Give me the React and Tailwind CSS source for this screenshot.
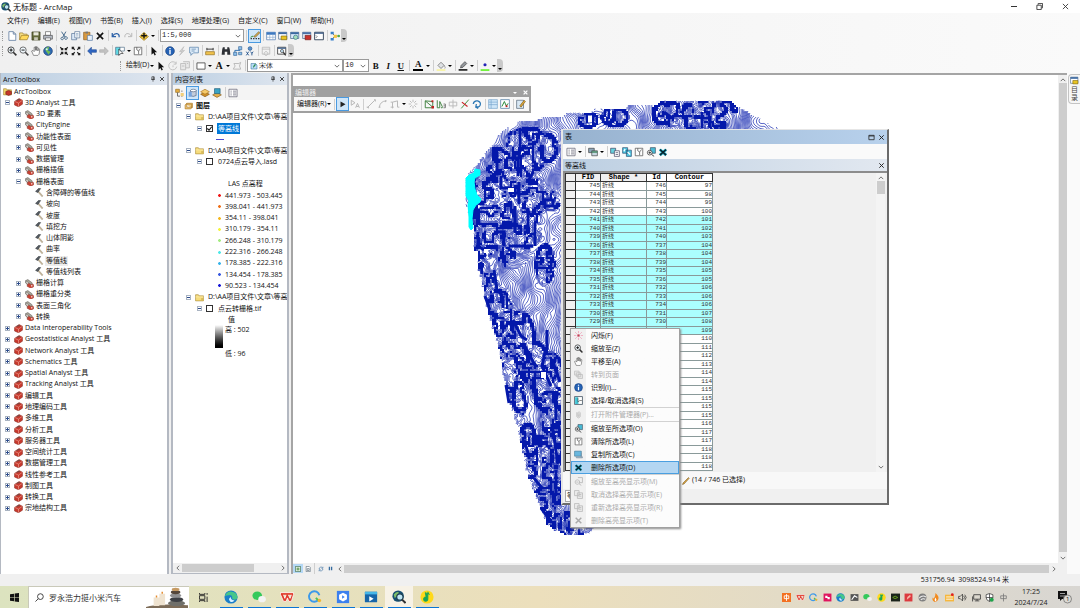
import React from "react";

/* ---------- contour map ---------- */

const OUTLINE = [
  [470, 172], [478, 165], [484, 155], [492, 146], [497, 137], [505, 129], [518, 122], [535, 121], [545, 117],
  [562, 117], [567, 113], [590, 113], [595, 109], [625, 109], [628, 105], [658, 105], [662, 101], [730, 101],
  [737, 106], [745, 110], [752, 115], [760, 118], [768, 124], [782, 130], [782, 150], [700, 400], [640, 500],
  [604, 526], [597, 526], [592, 531], [584, 534], [567, 535], [555, 530], [547, 524], [544, 515], [540, 506],
  [534, 491], [528, 476], [523, 452], [517, 425], [511, 404], [503, 374], [500, 352], [495, 335], [488, 312],
  [484, 294], [482, 280], [479, 270], [478, 252], [475, 250], [474, 228], [470, 215], [466, 205], [466, 180],
];

const SELECTED =
  "M466 178l3-3 5-2 1-4 5 1v5l-5 3-1 4 1 7 2 6 4 4-1 3-4 3-3 5-1 9 1 9-2 2-2-3v-10l-1-12 1-4-3-5z";

// centre x, centre y, half width, half height of the steep ground
const STEEP = [
  [508, 205, 38, 66], [480, 240, 10, 26], [530, 150, 30, 24], [488, 290, 11, 50], [500, 320, 14, 34], [520, 340, 16, 30],
  [534, 365, 16, 26], [550, 385, 18, 34], [554, 440, 16, 70], [506, 378, 10, 32], [516, 400, 11, 26],
  [528, 455, 11, 34], [545, 500, 18, 30], [565, 525, 30, 14], [545, 265, 10, 22], [550, 200, 11, 11],
  [668, 114, 16, 14], [704, 118, 28, 20], [615, 117, 14, 10], [588, 120, 10, 8], [728, 108, 10, 7],
];

const RIDGES =
  "M520 128v20l-1 10-4 2M497 152v22h4M511 158h7v18M501 176v12h9v5h8v-8M519 182v22M533 172l-4 8h6M478 232v14l6 4M494 232h10v14M503 224h12M515 206v26M528 208v26M509 246h24M535 232v14M545 200h8v6h-8zM481 262l1 12M494 270l3 20 6 6M485 296l5 14M503 296v12M513 320l8 16 6 4M524 345l12 22M547 330v20M545 352l-3 14 9 20M553 362l7 20M556 396v24M552 424l6 40M506 385l3 18M524 440l5 16M556 470v26M534 478l8 10M541 508l9 12M702 112v16M710 116v12M664 112l8 6";

function lattice(i, j, seed) {
  const v = Math.sin(i * 127.1 + j * 311.7 + seed * 74.7) * 43758.5453;
  return v - Math.floor(v);
}

function noise(x, y, seed) {
  const i = Math.floor(x);
  const j = Math.floor(y);
  const u = x - i;
  const v = y - j;
  const a = u * u * (3 - 2 * u);
  const b = v * v * (3 - 2 * v);
  const top = lattice(i, j, seed) * (1 - a) + lattice(i + 1, j, seed) * a;
  const bottom = lattice(i, j + 1, seed) * (1 - a) + lattice(i + 1, j + 1, seed) * a;
  return top * (1 - b) + bottom * b;
}

function inside(x, y) {
  let hit = false;
  for (let i = 0, j = OUTLINE.length - 1; i < OUTLINE.length; j = i, i += 1) {
    const [xi, yi] = OUTLINE[i];
    const [xj, yj] = OUTLINE[j];
    if (yi > y !== yj > y && x < ((xj - xi) * (y - yi)) / (yj - yi) + xi) hit = !hit;
  }
  return hit;
}

function steepness(x, y) {
  let m = 0;
  for (const [cx, cy, rx, ry] of STEEP) {
    const d = ((x - cx) / rx) ** 2 + ((y - cy) / ry) ** 2;
    if (d < 1) m = Math.max(m, Math.min(1, (1 - d) * 2.5));
  }
  return m;
}

function height(x, y) {
  const s = steepness(x, y);
  let h = x * 0.5 + noise(x / 34, y / 42, 1) * 22 + noise(x / 13, y / 15, 2) * 7 + noise(x / 5, y / 6, 5) * 1.6;
  if (s > 0) {
    const n = noise(x / 10, y / 11, 3) * 0.6 + noise(x / 4.5, y / 5, 6) * 0.4;
    const step = 1 / (1 + Math.exp(-(n - 0.5) * 16));
    h += s * (step * 14 + noise(x / 3.5, y / 4, 4) * 4);
  }
  return h;
}

function buildContours() {
  const step = 2;
  let lines = "";
  let solid = "";
  const columns = 160;
  const valueRow = (y) => Array.from({ length: columns + 1 }, (_, i) => height(464 + i * step, y));
  let above = valueRow(99);
  for (let y = 99; y < 537; y += step) {
    const below = valueRow(y + step);
    for (let i = 0; i < columns; i += 1) {
      const x = 464 + i * step;
      if (x > 612 && y > 134) break;
      if (!inside(x + 1, y + 1)) continue;
      const a = above[i];
      const b = above[i + 1];
      const c = below[i + 1];
      const d = below[i];
      const lo = Math.min(a, b, c, d);
      const hi = Math.max(a, b, c, d);
      if (hi - lo > 4.6) {
        solid += `M${x} ${y}h2v2h-2z`;
        continue;
      }
      for (let level = Math.ceil(lo); level < hi; level += 1) {
        const pts = [];
        if (a < level !== b < level) pts.push([x + (step * (level - a)) / (b - a), y]);
        if (b < level !== c < level) pts.push([x + step, y + (step * (level - b)) / (c - b)]);
        if (d < level !== c < level) pts.push([x + (step * (level - d)) / (c - d), y + step]);
        if (a < level !== d < level) pts.push([x, y + (step * (level - a)) / (d - a)]);
        for (let k = 0; k + 1 < pts.length; k += 2) {
          lines += `M${pts[k][0].toFixed(1)} ${pts[k][1].toFixed(1)}L${pts[k + 1][0].toFixed(1)} ${pts[k + 1][1].toFixed(1)}`;
        }
      }
    }
    above = below;
  }
  return { lines, solid };
}

const CONTOURS = buildContours();

function ContourMap() {
  return (
    <svg className="absolute top-0 left-0 h-[490px] w-[765px]" viewBox="293 75 765 490" aria-label="等高线">
      <path d={CONTOURS.lines} stroke="#0418aa" strokeWidth="0.65" fill="none" />
      <path d={CONTOURS.solid} fill="#0418aa" />
      <path d={RIDGES} stroke="#0418aa" strokeWidth="3" fill="none" />
      <path d="M508 188h6v4h-6zM484 249h4v4h-4zM541 372h5v6h-5zM588 116h4v6h-4z" fill="#fff" />
      <path d={SELECTED} stroke="#00ffff" strokeWidth="1" fill="#00ffff" strokeLinejoin="round" />
    </svg>
  );
}

/* ---------- icons, drawn on a 16 unit square ---------- */

const G = "#b9b9b9";

const ICONS = {
  logo: (
    <>
      <circle cx="7" cy="7" r="6.5" fill="#174f72" />
      <path d="M2 5q4-4 6-2l-2 4-3 2zM8 8l4-2v4l-4 2z" fill="#7fc06a" />
      <circle cx="9" cy="8" r="3.6" fill="#bfe6f5" stroke="#1c3c50" strokeWidth="1.3" />
      <path d="M11.5 11l4 4" stroke="#333" strokeWidth="2.4" />
    </>
  ),
  file: <path d="M3 1h7l4 4v10H3zM10 1v4h4" fill="#fff" stroke="#56749b" strokeWidth="1.2" />,
  open: (
    <>
      <path d="M1 14V3h5l1 2h6v3" fill="#f7e08a" stroke="#927018" />
      <path d="M1 14l3-7h12l-3 7z" fill="#ffd95a" stroke="#927018" />
    </>
  ),
  save: (
    <>
      <path d="M1.500 1.500h13v13h-13z" fill="#646b3b" stroke="#33361c" />
      <path d="M4 2h8v5H4z" fill="#e8e8dc" />
      <path d="M5 10h6v5H5z" fill="#c9c9b9" />
    </>
  ),
  print: (
    <>
      <path d="M4 1h8v6H4z" fill="#fff" stroke="#555" />
      <path d="M1 7h14v6H1z" fill="#b7bcc6" stroke="#444" />
      <path d="M4 11h8v4H4z" fill="#f7f7f7" stroke="#555" />
    </>
  ),
  cut: <path d="M4 1l6 9M11 1L6 10M5 10a2 2 0 1 0 .1 0M11 9a2.200 2.200 0 1 0 .1 0" fill="none" stroke="#3f6488" strokeWidth="1.500" />,
  copy: (
    <>
      <path d="M1 4h8v10H1z" fill="#dbe8f7" stroke="#49698f" />
      <path d="M6 1h8v10H6z" fill="#fff" stroke="#49698f" />
      <path d="M8 4h4M8 6h4M8 8h4" stroke="#7d9abc" />
    </>
  ),
  paste: (
    <>
      <path d="M1 2h10v12H1z" fill="#d99a40" stroke="#875716" />
      <path d="M4 1h4v3H4z" fill="#777" />
      <path d="M7 7h8v8H7z" fill="#e6f0fb" stroke="#4a6f9d" />
    </>
  ),
  del: <path d="M3 3l10 10M13 3L3 13" stroke="#111" strokeWidth="2.600" />,
  delTeal: (
    <>
      <path d="M3 4l10 9M13 4L3 13" stroke="#2ab6cf" strokeWidth="4.600" />
      <path d="M3 4l10 9M13 4L3 13" stroke="#08242e" strokeWidth="2.600" />
    </>
  ),
  delGray: <path d="M3 3l10 10M13 3L3 13" stroke="#aaa" strokeWidth="2.600" />,
  undo: <path d="M2 3v6h6M2.500 8.500C6 2 14 3 13 10" fill="none" stroke="#2d62a8" strokeWidth="2" />,
  redo: <path d="M14 3v6H8M13.500 8.500C10 2 2 3 3 10" fill="none" stroke={G} strokeWidth="1.600" />,
  addData: (
    <>
      <path d="M8 2l7 7-7 6-7-6z" fill="#f3c83b" stroke="#8e6a10" />
      <path d="M8 3v9M3.500 7.500h9" stroke="#111" strokeWidth="2.200" />
    </>
  ),
  editor: (
    <>
      <path d="M1 12h2M5 12h2M9 12h2M13 12h2" stroke="#222" strokeWidth="2" />
      <path d="M6 9l8-8 1.500 2-7 7z" fill="#e3b451" stroke="#634712" />
      <path d="M1 10l4-2" stroke="#2d8a2d" strokeWidth="1.500" />
    </>
  ),
  grid: (
    <>
      <path d="M1 2h14v12H1z" fill="#fff" stroke="#3a6aa8" />
      <path d="M1 2h14v4H1z" fill="#3d79c0" />
      <path d="M1 10h14M6 6v8M11 6v8" stroke="#86a6cc" />
    </>
  ),
  catalog: (
    <>
      <path d="M1 2h13v11H1z" fill="#fff" stroke="#35577f" />
      <path d="M1 2h13v3H1z" fill="#3b68a0" />
      <path d="M5 8h9v6H5z" fill="#e8c422" stroke="#7d6400" />
    </>
  ),
  search: (
    <>
      <path d="M1 2h13v10H1z" fill="#dceafa" stroke="#35577f" />
      <path d="M1 2h13v3H1z" fill="#3b68a0" />
      <circle cx="9" cy="10" r="3.500" fill="#a7ddba" stroke="#2b6b87" />
    </>
  ),
  toolwin: (
    <>
      <path d="M1 2h13v10H1z" fill="#e7eef7" stroke="#35577f" />
      <path d="M1 2h13v3H1z" fill="#4a71a6" />
      <path d="M5 7h9v7H5z" fill="#c9332d" stroke="#711713" />
    </>
  ),
  python: (
    <>
      <path d="M1 2h14v12H1z" fill="#fff" stroke="#33445b" strokeWidth="1.500" />
      <path d="M1 3.500h14" stroke="#3c5e8c" strokeWidth="2" />
      <path d="M3 7l2 2-2 2" fill="none" stroke="#333" />
    </>
  ),
  model: (
    <>
      <path d="M3 3l5 5-5 5M8 8h6" stroke="#333" fill="none" />
      <path d="M1 1h5v4H1zM1 11h5v4H1z" fill="#377fc9" />
      <path d="M6 6h5v5H6z" fill="#f2c43b" />
      <circle cx="14" cy="8" r="2" fill="#48a848" />
    </>
  ),
  zoomIn: (
    <>
      <circle cx="6.500" cy="6.500" r="5" fill="#eef6fb" stroke="#444" strokeWidth="1.500" />
      <path d="M10 10l5 5" stroke="#333" strokeWidth="2.600" />
      <path d="M4 6.500h5M6.500 4v5" stroke="#111" strokeWidth="1.600" />
    </>
  ),
  zoomOut: (
    <>
      <circle cx="6.500" cy="6.500" r="5" fill="#eef6fb" stroke="#555" strokeWidth="1.300" />
      <path d="M10 10l5 5" stroke="#444" strokeWidth="2.400" />
      <path d="M4 6.500h5" stroke="#111" strokeWidth="1.500" />
    </>
  ),
  hand: <path d="M4 15L1 8l2-1 2 2V2h2v5-6h2v6-5h2v6l1-4 2 1-1 8-2 2z" fill="#fff" stroke="#555" />,
  globe: (
    <>
      <circle cx="8" cy="8" r="7" fill="#2c68b4" stroke="#1d3f6b" />
      <path d="M3 5q4-5 7-3l-2 5 4 2-3 5q-2-3-3-4z" fill="#6fbb55" />
      <circle cx="6" cy="5" r="1.600" fill="#d6efff" />
    </>
  ),
  shrink: <path d="M2 2l4 4M6 3v3H3M14 2l-4 4M10 3v3h3M2 14l4-4M3 10h3v3M14 14l-4-4M13 10h-3v3" fill="none" stroke="#222" strokeWidth="1.800" />,
  expand: <path d="M6 6L2 2M2 5V2h3M10 6l4-4M11 2h3v3M6 10l-4 4M2 11v3h3M10 10l4 4M14 11v3h-3" fill="none" stroke="#222" strokeWidth="1.800" />,
  back: <path d="M1 8l6-6v4h8v4H7v4z" fill="#2f67c4" stroke="#224a91" />,
  forward: <path d="M15 8L9 2v4H1v4h8v4z" fill="#c2c2c2" stroke="#aaa" />,
  select: (
    <>
      <path d="M1 2h7v12H1z" fill="#62dbe6" stroke="#43647e" />
      <path d="M8 2h7v6H8z" fill="#fff" stroke="#43647e" />
      <path d="M6 5v10l3-3h4z" fill="#fff" stroke="#222" />
    </>
  ),
  clear: <path d="M2 2h12v12H2zM6 2v4l3 2 3-4M9 8v5" fill="#fff" stroke="#555" strokeWidth="1.200" />,
  arrow: <path d="M4 1v13l3-3 2 4 2-1-2-4h4z" fill="#111" />,
  info: (
    <>
      <circle cx="8" cy="8" r="7" fill="#2562b5" stroke="#163f7c" />
      <path d="M8 3v2M8 6.500V13" stroke="#fff" strokeWidth="2.200" />
    </>
  ),
  bolt: <path d="M11 1L4 9h4l-4 6 8-8H8z" fill="#d0d0d0" stroke={G} />,
  html: (
    <>
      <path d="M1 2h14v9H7l-4 4v-4H1z" fill="#e1eefa" stroke="#41719e" />
      <path d="M4 5h7M4 8h5" stroke="#41719e" />
    </>
  ),
  measure: (
    <>
      <path d="M1 9h14v5H1z" fill="#f0c24c" stroke="#8b6615" />
      <path d="M3 3v4M13 3v4M3 5h10" stroke="#333" strokeWidth="1.500" />
    </>
  ),
  binoc: <path d="M2 5l1-3h3v3h4V2h3l1 3 1 9h-5V9H6v5H1z" fill="#2c2f35" />,
  route: (
    <>
      <path d="M3 13V7h8V3" fill="none" stroke="#2c6eb0" strokeWidth="1.500" />
      <path d="M1 10h5v5H1zM9 1h5v5H9zM9 10h5v4H9z" fill="#8ec1ec" stroke="#2c5f94" />
    </>
  ),
  xy: (
    <>
      <circle cx="8" cy="4" r="3" fill="#5a93cf" stroke="#23558c" />
      <path d="M2 9l4 6M6 9l-4 6M9 9l2 3 2-3M11 12v3" stroke="#1e4e88" strokeWidth="1.400" fill="none" />
    </>
  ),
  clock: <path d="M2 2h12v11H2zM8 9a3 3 0 1 0 .1 0M2 5h12" fill="none" stroke={G} strokeWidth="1.300" />,
  viewer: (
    <>
      <path d="M1 2h13v11H1z" fill="#fff" stroke="#444" strokeWidth="1.400" />
      <path d="M1 3.500h13" stroke="#3b5e8c" strokeWidth="2" />
      <circle cx="8" cy="8" r="2.500" fill="#c6e4f6" stroke="#333" />
      <path d="M10 10l4 5" stroke="#333" strokeWidth="2" />
    </>
  ),
  rotate: <path d="M13 4a6.500 6.500 0 1 0 1 5M13 1v4H9M8 7v3" fill="none" stroke={G} strokeWidth="1.300" />,
  grp: <path d="M1 4h8v10H1zM5 1h10v10H9M3 8h4M11 4h2" fill="#e8e8e8" stroke={G} strokeWidth="1.300" />,
  rect: <path d="M1.500 3h13v10h-13z" fill="#fff" stroke="#444" strokeWidth="1.300" />,
  poly: <path d="M2 13l3-5-2-4h8l3-2-2 6 2 5z" fill="none" stroke={G} strokeWidth="1.500" />,
  font: (
    <>
      <path d="M2 3h9l3 3v8H2z" fill="#b9dcf6" stroke="#2b6694" />
      <path d="M6 12q0-7 6-9-1 6-6 9" fill="#2b8a4e" />
    </>
  ),
  bucket: (
    <>
      <path d="M3 7l5-5 5 5-5 5z" fill="#dfe2e5" stroke="#555" />
      <path d="M13 7q3 4 1 5" stroke="#777" fill="none" />
      <path d="M1 13h14v3H1z" fill="#f7f3a9" />
    </>
  ),
  pen: (
    <>
      <path d="M4 11l1-4 6-6 3 3-6 6z" fill="#93979c" stroke="#333" />
      <path d="M1 13h14v2.500H1z" fill="#111" />
    </>
  ),
  marker: (
    <>
      <circle cx="8" cy="6" r="2.500" fill="#2323b4" />
      <path d="M1 13h14v3H1z" fill="#73f23e" />
    </>
  ),
  list: <path d="M1.500 2h13v12h-13zM4 5h2M8 5h5M4 8h2M8 8h5M4 11h2M8 11h5" fill="#fff" stroke="#667" strokeWidth="1.200" />,
  tocOrder: (
    <>
      <path d="M1 2h6v5H1z" fill="#e6ae45" stroke="#93691c" />
      <path d="M4 7v6h4M10 5h2M10 9h2M10 13h2" stroke="#666" strokeWidth="1.500" fill="none" />
      <path d="M9 8h5v5H9z" fill="#f1cf7a" />
    </>
  ),
  tocSource: (
    <>
      <path d="M4 4v8q4 3 9 0V4z" fill="#c3cddb" stroke="#4b5d78" />
      <ellipse cx="8.500" cy="4" rx="4.500" ry="2" fill="#fff" stroke="#4b5d78" />
      <path d="M1 6h5v8H1z" fill="#79a4dd" />
    </>
  ),
  layers: (
    <>
      <path d="M8 6l7 4-7 4-7-4z" fill="#d08e26" stroke="#7d5515" />
      <path d="M8 2l7 4-7 4-7-4z" fill="#f6cb6b" stroke="#a36f1c" />
    </>
  ),
  tocSel: (
    <>
      <path d="M8 7l7 4-7 4-7-4z" fill="#e7b04c" stroke="#7d5515" />
      <path d="M4 1h9v8H4z" fill="#3aa3c4" stroke="#1d5975" />
    </>
  ),
  stack: <path d="M2 14V7l3-3v7l10 0-3 3zM5 4h10v7M3.500 5.500h10v7" fill="#efc97d" stroke="#ad7a28" strokeWidth="1.200" />,
  folder: (
    <>
      <path d="M1 3h5l1 2h8v9H1z" fill="#f6dc7c" stroke="#a0812a" />
      <path d="M1 7h14" stroke="#fff3bf" />
      <path d="M11 9h4v5h-4z" fill="#d8bb5b" />
    </>
  ),
  toolroot: (
    <>
      <path d="M1 3h5l1 2h8v9H1z" fill="#f3d66b" stroke="#a0812a" />
      <path d="M5 8l5-2 5 2v5l-5 2-5-2z" fill="#c4362b" stroke="#6b1812" />
    </>
  ),
  toolbox: (
    <>
      <path d="M1 6l8-5 6 3v7l-7 4.500-7-3z" fill="#c8392d" stroke="#8a2a20" />
      <path d="M1 6l7 3 7-5M8 9v6" fill="none" stroke="#f3b0a3" />
      <path d="M5 5q1-3 5-2" fill="none" stroke="#555" strokeWidth="1.500" />
    </>
  ),
  toolset: (
    <>
      <path d="M4 9l5-2 6 3v4l-5 2-6-3z" fill="#d03f30" stroke="#8a2a20" />
      <path d="M1 3l4-2 8 6-2 3zM1 3v4l5 4" fill="#aaa79b" stroke="#5e5b55" />
      <circle cx="12" cy="12" r="1.500" fill="#f5d6cf" />
    </>
  ),
  hammer: (
    <>
      <path d="M6 5l8 9-1.500 1.500L5 7z" fill="#cdbd9a" stroke="#8d8270" strokeWidth="0.800" />
      <path d="M1 6l5-5h4L5 8z" fill="#555c62" stroke="#33383d" />
    </>
  ),
  pageset: (
    <>
      <path d="M1 2h8v8H1z" fill="#67d1dd" stroke="#335" />
      <path d="M7 6h8v9H7z" fill="#fff" stroke="#335" />
      <path d="M9 9h4M9 12h4" stroke="#335" />
    </>
  ),
  switchsel: (
    <>
      <path d="M1 1h8v9H1zM7 5h8v10H7z" fill="#4fc6e1" stroke="#246" />
      <path d="M9 8l4 4M5 3l-2 4" stroke="#fff" strokeWidth="2" />
    </>
  ),
  zoomSel: (
    <>
      <path d="M7 1h8v9H7z" fill="#49bad4" stroke="#345" />
      <circle cx="6" cy="9" r="3.800" fill="#fff" stroke="#444" strokeWidth="1.300" />
      <path d="M4 9h4M6 7v4M9 12l4 3" stroke="#333" strokeWidth="1.400" />
    </>
  ),
  related: (
    <>
      <path d="M1 2h9v7H1z" fill="#8da5b8" stroke="#333" />
      <path d="M6 6h9v8H6z" fill="#c8d8e2" stroke="#333" />
      <path d="M6 8h9" stroke="#2c7a4c" strokeWidth="2" />
    </>
  ),
  flash: (
    <>
      <path d="M8 0v4M8 12v4M0 8h4M12 8h4M2 2l3 3M14 2l-3 3M2 14l3-3M14 14l-3-3" stroke="#f09ab4" strokeWidth="1.300" />
      <path d="M6 6h4v4H6z" fill="#c33b53" />
    </>
  ),
  pages: <path d="M1 2h8v7H1zM4 5h8v7H4zM7 8h8v7H7z" fill="#e9e9e9" stroke="#bbb" strokeWidth="1.300" />,
  selbox: (
    <>
      <path d="M1 1h14v14H1z" fill="#fff" stroke="#345" strokeWidth="1.300" />
      <path d="M2 2h5l1 12H2z" fill="#42c5d6" />
      <path d="M7 3v8l3-3h4" fill="none" stroke="#333" />
    </>
  ),
  clip: <path d="M5 4v8q3 4 6 0V5q-2-4-4 0v6h2V6" fill="none" stroke="#bbb" strokeWidth="1.500" />,
  copysel: (
    <>
      <path d="M1 2h12v9H1z" fill="#69b7de" stroke="#38708e" />
      <path d="M4 12h11v2H4zM13 5v8" fill="#a8c9dc" stroke="#789" />
    </>
  ),
  zoomGray: <path d="M7 1h8v9H9M6 5a4 4 0 1 0 .1 0M9 12l4 3M4 9h4" fill="none" stroke="#bbb" strokeWidth="1.600" />,
  pageGray: <path d="M1 1h8v9H1zM6 5h9v10H6zM8 8h5M8 11h5" fill="#ededed" stroke="#bbb" strokeWidth="1.500" />,
  pencil: <path d="M1 15l1-3L13 1l1.500 1.500L4 14z" fill="#d9a441" stroke="#6f5116" />,
  eArrow: <path d="M4 4v9l8-4.500z" fill="#222" />,
  eArrowA: <path d="M2 2v8l6-4zM9 14l3-7 3 7M10 12h4" fill="none" stroke={G} strokeWidth="1.600" />,
  eLine: <path d="M2 14L14 2M1 13h3v2M13 1h2v3" fill="none" stroke={G} strokeWidth="1.600" />,
  eArc: <path d="M2 14Q3 3 14 3M1 13h3M12 2v3" fill="none" stroke={G} strokeWidth="1.600" />,
  eTrace: <path d="M1 13h5M4 15V5l8-2v10h3M1 5h3" fill="none" stroke={G} strokeWidth="1.600" />,
  eBurst: <path d="M8 1v4M8 11v4M1 8h4M11 8h4M3 3l3 3M13 3l-3 3M3 13l3-3M13 13l-3-3" stroke={G} strokeWidth="1.500" />,
  eVert: (
    <>
      <path d="M2 3v11h12V4L2 3l12 10" fill="none" stroke="#3d7f3d" strokeWidth="1.500" />
      <path d="M12 11h4v4h-4zM12 2h3v3h-3z" fill="#b22" />
    </>
  ),
  eShape: (
    <>
      <path d="M2 2v12h4V4l4 8v2H8" fill="none" stroke="#3d7f3d" strokeWidth="1.500" />
      <path d="M12 8h3v6h-3M12 11h3" fill="none" stroke="#444" />
    </>
  ),
  eCut: <path d="M8 1v14M2 5h12v6H2z" fill="none" stroke={G} strokeWidth="1.500" />,
  eSplit: (
    <>
      <path d="M2 15L14 1" stroke="#3c8c3c" strokeWidth="1.500" />
      <path d="M3 5l9 7" stroke="#c22" strokeWidth="1.800" />
    </>
  ),
  eRot: <path d="M2 8Q3 2 9 3q6 2 4 7-2 4-6 2M7 8l-1 5 4 2" fill="none" stroke="#2e79b5" strokeWidth="2" />,
  eAttr: <path d="M1 1h14v14H1zM5 1v14M1 5h14M1 9h14" fill="#cfe6f8" stroke="#6f9fca" />,
  eSketch: (
    <>
      <path d="M1 1h14v14H1z" fill="#fff" stroke="#5f87ab" strokeWidth="1.300" />
      <path d="M3 12l4-8 3 7 3-4" fill="none" stroke="#2b8a3d" strokeWidth="1.600" />
      <path d="M9 10h3v3H9z" fill="#b22" />
    </>
  ),
  eCreate: (
    <>
      <path d="M1 2h11v13H1z" fill="#d8e8f5" stroke="#456" />
      <path d="M6 11l7-9 2 2-7 9z" fill="#e2a93a" stroke="#6f5116" />
    </>
  ),
  refresh: <path d="M3 8a5 5 0 0 1 9-3M13 2v4H9M13 8a5 5 0 0 1-9 3M3 14v-4h4" fill="none" stroke="#336a9e" strokeWidth="1.600" />,
  pause: <path d="M4 4h3v8H4zM9 4h3v8H9z" fill="#336a9e" />,
  mapview: (
    <>
      <path d="M1 1h14v14H1z" fill="#fff" stroke="#3b6e4b" strokeWidth="2" />
      <path d="M4 4h8v8H4z" fill="#76a96e" />
    </>
  ),
  layoutview: <path d="M3 1h8l3 3v11H3zM6 7h5v5H6z" fill="#fff" stroke="#456" strokeWidth="1.500" />,
  pin: <path d="M5 2h6v7H5zM3 9h10M8 9v6M10 2v7" fill="none" stroke="#333" strokeWidth="1.800" />,
  close: <path d="M3 3l10 10M13 3L3 13" stroke="#222" strokeWidth="2.200" />,
  max: <path d="M2 3h12v10H2zM2 4.500h12" fill="none" stroke="#222" strokeWidth="1.800" />,
};

function Icon({ name, className = "size-[11px]" }) {
  return (
    <svg viewBox="0 0 16 16" className={`shrink-0 ${className}`} aria-hidden="true">
      {ICONS[name]}
    </svg>
  );
}

function Chevron({ dir = "down", className = "size-[7px]" }) {
  const d = { down: "M2 5l6 6 6-6", up: "M2 11l6-6 6 6", left: "M11 2L5 8l6 6", right: "M5 2l6 6-6 6" }[dir];
  return (
    <svg viewBox="0 0 16 16" className={`shrink-0 ${className}`} aria-hidden="true">
      <path d={d} fill="none" stroke="#555" strokeWidth="2.200" />
    </svg>
  );
}

function Caret({ className = "text-black" }) {
  return (
    <span className={`flex w-[6px] shrink-0 items-center justify-center ${className}`}>
      <svg viewBox="0 0 8 4" className="h-[2px] w-[4px]" aria-hidden="true">
        <path d="M0 0h8L4 4z" fill="currentColor" />
      </svg>
    </span>
  );
}

const Sep = () => (
  <span className="flex w-[4px] shrink-0 justify-center">
    <span className="h-[11px] w-px bg-[#cfcfcf]" />
  </span>
);
const Grip = () => <span className="mx-[2px] h-[10px] w-[2px] shrink-0 border-l border-dotted border-[#999]" />;
const Overflow = () => (
  <button aria-label="工具栏选项" className="flex h-[13px] w-[6px] shrink-0 items-end justify-center rounded-r-sm bg-[#c9c9c9] pb-[2px]">
    <Caret />
  </button>
);

function Tool({ name, label, active }) {
  return (
    <button
      aria-label={label || name}
      className={`flex h-[14px] shrink-0 items-center justify-center ${active ? "w-[13px] border border-[#4a9ae0] bg-[#cfe6f9]" : "w-[12px]"}`}
    >
      <Icon name={name} className="size-[10px]" />
    </button>
  );
}

/* "|" is a separator, "v" a drop-down caret, "*" marks a pressed button */
function Tools({ items }) {
  return items.split(" ").map((item, i) => {
    if (item === "|") return <Sep key={i} />;
    if (item === "v") return <Caret key={i} />;
    if (item.startsWith("*")) return <Tool key={i} name={item.slice(1)} active />;
    return <Tool key={i} name={item} />;
  });
}

function Combo({ label, value, className, icon, font = "font-sans" }) {
  return (
    <div className={`relative flex h-[13px] shrink-0 items-center border border-[#9a9a9a] bg-white ${className}`}>
      {icon && <Icon name={icon} className="ml-[2px] size-[8px]" />}
      <select aria-label={label} className={`h-full min-w-0 flex-1 appearance-none bg-transparent pl-[1px] text-[7px] leading-[11px] text-[#222] outline-none ${font}`}>
        <option>{value}</option>
      </select>
      <Chevron className="pointer-events-none absolute right-[2px] size-[6px]" />
    </div>
  );
}

/* ---------- header ---------- */

const MENUS = ["文件(F)", "编辑(E)", "视图(V)", "书签(B)", "插入(I)", "选择(S)", "地理处理(G)", "自定义(C)", "窗口(W)", "帮助(H)"];

function Header() {
  return (
    <header>
      <div className="flex h-[13px] items-center bg-white">
        <Icon name="logo" className="ml-[1px] size-[10px]" />
        <h1 className="ml-[2px] text-[8px] leading-[12px]">无标题 - ArcMap</h1>
        <div className="ml-auto flex items-center gap-[19px] pr-[11px]">
          <button aria-label="最小化" className="flex h-[10px] w-[6px] items-center"><span className="h-px w-full bg-[#333]" /></button>
          <button aria-label="还原">
            <svg viewBox="0 0 8 8" className="size-[7px]"><path d="M1 2.500h5v5H1zM2.500 2V.5h5v5H6.500" fill="none" stroke="#333" /></svg>
          </button>
          <button aria-label="关闭">
            <svg viewBox="0 0 8 8" className="size-[7px]"><path d="M1 1l6 6M7 1L1 7" stroke="#333" /></svg>
          </button>
        </div>
      </div>
      <div className="bg-linear-to-r from-[#f0f0f0] to-[#fafafa]">
        <nav className="flex h-[15px] items-center gap-[9px] pl-[7px] text-[7px] leading-[12px]">
          {MENUS.map((m) => <button key={m}>{m}</button>)}
        </nav>
        <div className="flex h-[15px] items-center">
          <Grip />
          <Tools items="file open save print | cut copy paste del | undo redo | addData v |" />
          <Combo label="比例尺" value="1:5,000" className="w-[84px]" font="font-[Liberation_Mono,monospace]" />
          <Tools items="| *editor | grid catalog search toolwin python | model" />
          <Overflow />
        </div>
        <div className="flex h-[15px] items-center">
          <Grip />
          <Tools items="zoomIn zoomOut hand globe | shrink expand | back forward | select v clear | arrow | info bolt html | measure | binoc route xy | clock | viewer" />
          <Overflow />
        </div>
        <div className="flex h-[15px] items-center pl-[118px] text-[7px]">
          <Grip />
          <button className="ml-[2px] flex items-center">绘制(D)<Caret /></button>
          <Tools items="arrow rotate grp | rect v" />
          <button aria-label="文本" className="w-[12px] font-[Liberation_Serif,serif] text-[10px] leading-[12px] font-bold">A</button>
          <Tools items="v poly |" />
          <Combo label="字体" value="宋体" icon="font" className="w-[96px]" />
          <Combo label="字号" value="10" className="w-[26px]" font="font-[Liberation_Mono,monospace]" />
          <div className="flex font-[Liberation_Serif,serif] text-[9px] leading-[12px] font-bold">
            <button className="w-[13px]">B</button>
            <button className="w-[12px] italic">I</button>
            <button className="w-[13px] underline">U</button>
          </div>
          <Sep />
          <button aria-label="字体颜色" className="mx-[2px] flex h-[11px] w-[10px] items-center justify-center border-b-2 border-black font-[Liberation_Serif,serif] text-[9px] leading-[9px] font-bold">A</button>
          <Tools items="v | bucket v | pen v | marker v" />
          <Overflow />
        </div>
      </div>
    </header>
  );
}

/* ---------- docked panels ---------- */

function PanelTitle({ children }) {
  return (
    <div className="flex h-[12px] shrink-0 items-center bg-linear-to-r from-[#bccfe2] to-[#dfe6ef] pl-[2px] text-[7px]">
      <h2 className="flex-1 leading-[11px]">{children}</h2>
      <button aria-label="自动隐藏"><Icon name="pin" className="mr-[3px] size-[6px]" /></button>
      <button aria-label="关闭"><Icon name="close" className="mr-[2px] size-[6px]" /></button>
    </div>
  );
}

function Toggle({ open }) {
  return (
    <button aria-label={open ? "折叠" : "展开"} aria-expanded={!!open} className="flex size-[5px] shrink-0 items-center justify-center border border-[#a9b3c1] bg-white">
      <svg viewBox="0 0 3 3" className="size-[3px]">
        <path d={open ? "M0 1.500h3" : "M0 1.500h3M1.500 0v3"} stroke="#2c4b8c" />
      </svg>
    </button>
  );
}

const sets = (names) => names.map((n) => [2, "toolset", n]);
const TREE = [
  [0, "toolroot", "ArcToolbox"],
  [1, "toolbox", "3D Analyst 工具", true],
  ...sets(["3D 要素", "CityEngine", "功能性表面", "可见性", "数据管理", "栅格插值"]),
  [2, "toolset", "栅格表面", true],
  ...["含障碍的等值线", "坡向", "坡度", "填挖方", "山体阴影", "曲率", "等值线", "等值线列表"].map((n) => [3, "hammer", n]),
  ...sets(["栅格计算", "栅格重分类", "表面三角化", "转换"]),
  ...[
    "Data Interoperability Tools", "Geostatistical Analyst 工具", "Network Analyst 工具", "Schematics 工具",
    "Spatial Analyst 工具", "Tracking Analyst 工具", "编辑工具", "地理编码工具", "多维工具", "分析工具", "服务器工具",
    "空间统计工具", "数据管理工具", "线性参考工具", "制图工具", "转换工具", "宗地结构工具",
  ].map((n) => [1, "toolbox", n]),
];
const INDENT = ["pl-[2px]", "pl-[4px]", "pl-[15px]", "pl-[30px]"];

function Toolbox() {
  return (
    <section className="flex w-[169px] shrink-0 flex-col border-r-2 border-l border-[#b4b9c2] bg-white">
      <PanelTitle>ArcToolbox</PanelTitle>
      <ul className="mt-px grid h-[428px] auto-rows-fr text-[7px]">
        {TREE.map(([level, icon, name, open]) => (
          <li key={name + level} className={`flex min-h-0 items-center leading-[10px] ${INDENT[level]}`}>
            {(level === 1 || level === 2) && <Toggle open={open} />}
            <Icon name={icon} className={`size-[9px] ${level === 0 ? "" : "ml-[4px]"}`} />
            <span className={`ml-px px-px whitespace-nowrap ${name === "等值线" ? "bg-[#ededed]" : ""}`}>{name}</span>
          </li>
        ))}
      </ul>
    </section>
  );
}

const CLASSES = [
  ["441.973 - 503.445", "text-[#f01818]"],
  ["398.041 - 441.973", "text-[#f07018]"],
  ["354.11 - 398.041", "text-[#f5b820]"],
  ["310.179 - 354.11", "text-[#f4f43a]"],
  ["266.248 - 310.179", "text-[#a4ec80]"],
  ["222.316 - 266.248", "text-[#4ee8e8]"],
  ["178.385 - 222.316", "text-[#38b4ea]"],
  ["134.454 - 178.385", "text-[#3858e0]"],
  ["90.523 - 134.454", "text-[#1616d8]"],
];

function SourceRow() {
  return (
    <li className="flex items-center pl-[13px]">
      <Toggle open />
      <Icon name="folder" className="mx-[4px] size-[9px]" />
      <span className="whitespace-nowrap">D:\AA项目文件\文章\等高线</span>
    </li>
  );
}

function LayerRow({ name, checked }) {
  return (
    <li className="flex items-center pl-[24px]">
      <Toggle open />
      <label className="flex items-center">
        <span className="relative mx-[4px] flex size-[7px]">
          <input type="checkbox" defaultChecked={checked} className="peer size-[7px] appearance-none border border-[#333] bg-white" />
          <svg viewBox="0 0 8 8" className="pointer-events-none absolute inset-0 hidden size-[7px] peer-checked:block">
            <path d="M1.500 4l2 2 3-4" fill="none" stroke="#111" strokeWidth="1.300" />
          </svg>
        </span>
        <span className={`px-px leading-[11px] whitespace-nowrap ${checked ? "bg-[#0078d7] text-white" : ""}`}>{name}</span>
      </label>
    </li>
  );
}

function Contents() {
  return (
    <section className="ml-[2px] flex w-[118px] shrink-0 flex-col border-x-2 border-b border-[#b4b9c2] bg-white">
      <PanelTitle>内容列表</PanelTitle>
      <div className="flex h-[15px] shrink-0 items-center bg-[#f4f4f4] pl-px">
        <Tools items="tocOrder *tocSource layers tocSel | list" />
      </div>
      <ul className="grid h-[259px] auto-rows-fr overflow-hidden text-[7px] leading-[10px] *:min-h-0">
        <li className="flex items-center pl-[3px] font-bold">
          <Toggle open />
          <Icon name="stack" className="mx-[3px] size-[9px]" />
          图层
        </li>
        <SourceRow />
        <LayerRow name="等高线" checked />
        <li className="flex items-center pl-[43px]"><span className="h-px w-[8px] bg-[#4a4ad0]" /></li>
        <SourceRow />
        <LayerRow name="0724点云导入.lasd" />
        <li />
        <li className="flex items-center pl-[55px]">LAS 点高程</li>
        {CLASSES.map(([range, color]) => (
          <li key={range} className="flex items-center pl-[45px]">
            <svg viewBox="0 0 3 3" className={`size-[3px] ${color}`}><path d="M1.500 0v3M0 1.500h3" stroke="currentColor" strokeWidth="1.400" /></svg>
            <span className="ml-[4px] whitespace-nowrap">{range}</span>
          </li>
        ))}
        <SourceRow />
        <LayerRow name="点云转栅格.tif" />
        <li className="flex items-center pl-[55px]">值</li>
        <li className="row-span-3 flex pl-[42px]">
          <span className="h-[23px] w-[8px] bg-linear-to-b from-white to-black" />
          <span className="ml-[2px] flex flex-col justify-between"><span>高 : 502</span><span>低 : 96</span></span>
        </li>
      </ul>
      <HScroll className="mt-auto" thumb="mr-[24px]" />
    </section>
  );
}

function HScroll({ className = "", thumb = "" }) {
  return (
    <div className={`flex h-[10px] min-w-0 items-center bg-[#f0f0f0] ${className}`}>
      <button aria-label="向左" className="flex w-[9px] justify-center"><Chevron dir="left" className="size-[6px]" /></button>
      <div className={`h-[8px] flex-1 bg-[#cdcdcd] ${thumb}`} />
      <button aria-label="向右" className="flex w-[9px] justify-center"><Chevron dir="right" className="size-[6px]" /></button>
    </div>
  );
}

/* ---------- floating windows ---------- */

function EditorBar() {
  return (
    <section className="absolute top-[11px] -left-px w-[239px] border-2 border-[#a0a0a0] bg-[#f7f7f7]">
      <div className="flex h-[9px] items-center bg-[#a0a0a0] pl-px text-[7px] leading-[9px] text-[#efefef]">
        <h2 className="flex-1">编辑器</h2>
        <Caret className="mr-[5px] text-white" />
        <button aria-label="关闭" className="mr-px">
          <svg viewBox="0 0 8 8" className="size-[5px]"><path d="M1 1l6 6M7 1L1 7" stroke="#fff" strokeWidth="2" /></svg>
        </button>
      </div>
      <div className="flex h-[14px] items-center pl-[3px] text-[7px]">
        <button className="flex items-center whitespace-nowrap">编辑器(R)<Caret /></button>
        <Tools items="| *eArrow eArrowA | eLine eArc eTrace v eBurst | eVert eShape eCut eSplit eRot | eAttr eSketch | eCreate" />
      </div>
    </section>
  );
}

const FIDS = [745, 744, 743, 742, 741, 740, 739, 736, 737, 738, 734, 735, 731, 732, 733, 730, 729];
const LEVELS = [97, 98, 99, 100, 101, 102, 103, 104, 104, 104, 105, 105, 106, 106, 106, 107, 108, 109, 110, 111, 112, 113, 114, 114, 115, 115, 115, 115, 116, 117, 117, 118, 118, 118];

function AttributeTable() {
  return (
    <section className="absolute top-[54px] left-[268px] flex h-[376px] w-[328px] flex-col border-t border-r-2 border-b-2 border-l-2 border-t-[#e6e6e6] border-r-[#6b6b6b] border-b-[#6b6b6b] border-l-[#e6e6e6] bg-[#f0f0f0] text-[7px]">
      <div className="flex h-[14px] shrink-0 items-center gap-[3px] bg-linear-to-r from-[#97b2cf] to-[#b8d1ec] px-[2px]">
        <h2 className="flex-1">表</h2>
        <button aria-label="最大化"><Icon name="max" className="size-[7px]" /></button>
        <button aria-label="关闭"><Icon name="close" className="size-[7px]" /></button>
      </div>
      <div className="flex h-[15px] shrink-0 items-center bg-[#fafafa] pl-[2px]">
        <Tools items="list v | related v | pageset switchsel clear zoomSel delTeal" />
      </div>
      <div className="flex h-[12px] shrink-0 items-center bg-linear-to-r from-[#bccfe2] to-[#e2e8f0] px-[2px]">
        <h3 className="flex-1 leading-[11px]">等高线</h3>
        <button aria-label="关闭表"><Icon name="close" className="size-[7px]" /></button>
      </div>
      <div className="flex min-h-0 flex-1 justify-between overflow-hidden border-t-2 border-l-2 border-[#8c8c8c]">
        <table className="h-[298px] w-[147px] shrink-0 table-fixed border-collapse bg-white font-[Liberation_Mono,Noto_Sans_CJK_SC,monospace] text-[6px] leading-[7px] text-[#333]">
          <colgroup>
            <col className="w-[10px]" />
            <col className="w-[25px]" />
            <col className="w-[46px]" />
            <col className="w-[20px]" />
            <col className="w-[46px]" />
          </colgroup>
          <thead>
            <tr className="text-[7px] text-black *:border *:border-[#333] *:p-0">
              <th className="bg-[#f0f0f0]" aria-label="行" />
              <th className="bg-[#f0f0f0]">FID</th>
              <th className="bg-[#f0f0f0]">Shape *</th>
              <th>Id</th>
              <th>Contour</th>
            </tr>
          </thead>
          <tbody>
            {LEVELS.map((level, i) => {
              const fid = FIDS[i];
              return (
                <tr key={i} className={`*:border *:border-[#8a9a9a] *:p-0 ${i > 3 && i < 18 ? "bg-[#abffff]" : ""}`}>
                  <td className="border-[#333]! bg-[#f0f0f0]" />
                  <td className="text-right">{fid}</td>
                  <td className="pl-px! text-left">{fid && "折线"}</td>
                  <td className="text-right">{fid && fid + 1}</td>
                  <td className="text-right">{level}</td>
                </tr>
              );
            })}
          </tbody>
        </table>
        <div className="mr-[2px] flex w-[9px] flex-col items-center bg-[#f4f4f4] pt-[2px]">
          <button aria-label="向上"><Chevron dir="up" className="size-[6px]" /></button>
          <div className="h-[13px] w-[8px] bg-[#cdcdcd]" />
          <button aria-label="向下" className="mt-auto pb-[2px]"><Chevron className="size-[6px]" /></button>
        </div>
      </div>
      <div className="flex h-[17px] shrink-0 items-center bg-[#f8f8f8] pl-[119px]">
        <Icon name="pencil" className="mr-[2px] size-[8px]" />
        <span>(14 / 746 已选择)</span>
      </div>
      <div className="flex h-[14px] shrink-0 items-center bg-[#f0f0f0] pl-[2px]">
        <button className="border border-[#aaa] bg-white px-px leading-[10px]">等高线</button>
      </div>
    </section>
  );
}

const MENU_ITEMS = [
  ["flash", "闪烁(F)"], ["zoomIn", "缩放至(Z)"], ["hand", "平移至(A)"], ["pages", "转到页面", "off"], ["info", "识别(I)..."],
  ["selbox", "选择/取消选择(S)"], null, ["clip", "打开附件管理器(P)...", "off"], null, ["zoomSel", "缩放至所选项(O)"],
  ["clear", "清除所选项(L)"], ["copysel", "复制所选项(C)"], ["delTeal", "删除所选项(D)", "hot"], null, ["zoomGray", "缩放至高亮显示项(M)", "off"],
  ["pageGray", "取消选择高亮显示项(E)", "off"], ["pageGray", "重新选择高亮显示项(R)", "off"], ["delGray", "删除高亮显示项(T)", "off"],
];

function ContextMenu() {
  return (
    <div role="menu" className="absolute top-[253px] left-[277px] w-[110px] border border-[#a0a0a0] bg-linear-to-r from-[#f0f0f0] from-[15px] to-[#fcfcfc] to-[15px] text-[7px] shadow-[1px_1px_2px_#888]">
      {MENU_ITEMS.map((item, i) => {
        if (!item) return <div key={i} className="ml-[19px] h-px bg-[#d2d2d2]" />;
        const [icon, label, state] = item;
        return (
          <button
            key={label}
            role="menuitem"
            disabled={state === "off"}
            className={`flex h-[13px] w-full items-center border pl-[2px] text-left leading-[11px] whitespace-nowrap ${state === "hot" ? "border-[#4a9fe0] bg-[#b3d6f2]" : "border-transparent"} ${state === "off" ? "text-[#aaa]" : "text-[#111]"}`}
          >
            <Icon name={icon} className="mr-[8px] size-[9px]" />
            {label}
          </button>
        );
      })}
    </div>
  );
}

function MapArea() {
  return (
    <main className="ml-[2px] flex min-w-0 flex-1 flex-col border-t-2 border-l-2 border-[#a5a5a5] bg-white">
      <div className="flex min-h-0 flex-1">
        <div className="relative min-w-0 flex-1">
          <ContourMap />
          <EditorBar />
          <AttributeTable />
          <ContextMenu />
        </div>
        <div className="flex w-[9px] flex-col items-center bg-[#f0f0f0] py-[2px]">
          <button aria-label="向上"><Chevron dir="up" className="size-[6px]" /></button>
          <div className="mb-[3px] w-[8px] flex-1 bg-[#cdcdcd]" />
          <button aria-label="向下"><Chevron className="size-[6px]" /></button>
        </div>
      </div>
      <div className="flex h-[11px] shrink-0 items-center bg-[#f0f0f0]">
        <button aria-label="数据视图" className="flex h-[9px] w-[10px] items-center justify-center bg-[#b5d8f5]"><Icon name="mapview" className="size-[6px]" /></button>
        <button aria-label="布局视图" className="flex w-[9px] justify-center"><Icon name="layoutview" className="size-[6px]" /></button>
        <Sep />
        <button aria-label="刷新" className="flex w-[9px] justify-center"><Icon name="refresh" className="size-[6px]" /></button>
        <button aria-label="暂停" className="flex w-[10px] justify-center"><Icon name="pause" className="size-[7px]" /></button>
        <HScroll className="mr-[9px] flex-1" />
      </div>
    </main>
  );
}

/* ---------- bottom bars ---------- */

const APPS = {
  edge: (
    <>
      <circle cx="8" cy="8" r="7.500" fill="#1b7fc9" />
      <path d="M1 7a7.500 7.500 0 0 1 14.500 1q0 3-4 3-3-1-2-3-1-3-4-2-3 0-4.500 1" fill="#46c689" />
      <path d="M8 8q-1 3 4 4-3 3-5 1-3-3 1-5" fill="#d8f1ff" />
    </>
  ),
  wechat: (
    <>
      <ellipse cx="6" cy="6.500" rx="5.500" ry="4.800" fill="#35c95b" />
      <ellipse cx="11.500" cy="10.500" rx="4.300" ry="3.600" fill="#f3f3f3" />
    </>
  ),
  wps: <path d="M.5 3h15v2l-2.500 8h-3L8.500 9 7 13H4L.5 5zM4 5.500l1.500 4L7 5.500M9.500 5.500l2 4 1.500-4" fill="#e03a2c" stroke="#fff" strokeWidth="0.900" />,
  qcloud: (
    <>
      <path d="M12 11A6 6 0 1 1 13 6" fill="none" stroke="#3c99ea" strokeWidth="2.200" />
      <path d="M9 9l3 3" stroke="#4fc05a" strokeWidth="2.200" />
      <circle cx="13" cy="12" r="2" fill="#f2b431" />
    </>
  ),
  kplayer: (
    <>
      <path d="M1 1h14v14H1z" fill="#3c80ee" />
      <path d="M8 3l4.500 2.500v5L8 13l-4.500-2.500v-5z" fill="#fff" />
      <path d="M7 6l3 2-3 2z" fill="#3c80ee" />
    </>
  ),
  film: (
    <>
      <path d="M1 2h14v12H1z" fill="#1765a8" />
      <path d="M1 2h14v3H1z" fill="#46b7e8" />
      <path d="M6 7l5 3-5 3z" fill="#fff" />
    </>
  ),
  arcmap: ICONS.logo,
  music: (
    <>
      <circle cx="8" cy="8" r="7.500" fill="#ffd91a" />
      <path d="M9 2v8a2.500 2.500 0 1 1-2-2L6 3l5 2" fill="#18a558" stroke="#18a558" />
    </>
  ),
  ime: (
    <>
      <path d="M0 0h16v16H0z" fill="#f37021" />
      <path d="M4 5h8v5H4zM8 2v12" fill="none" stroke="#fff" strokeWidth="1.600" />
    </>
  ),
  pink: (
    <>
      <path d="M1 1h14v14H1z" fill="#e0155f" />
      <path d="M4 5h4v4H4zM8 7h4v4H8z" fill="#fff" />
    </>
  ),
  disk: (
    <>
      <path d="M1 2h14v12H1z" fill="#555" />
      <path d="M3 12l5-7 5 3" stroke="#fff" strokeWidth="2" fill="none" />
    </>
  ),
  nvidia: (
    <>
      <path d="M0 1h16v14H0z" fill="#1b241b" />
      <path d="M3 8q4-5 9 0-5 4-9 0" fill="none" stroke="#6fae20" strokeWidth="1.500" />
    </>
  ),
  red: (
    <>
      <path d="M1 1h14v14H1z" fill="#dc3b3f" />
      <path d="M5 12l1-5 5-4 1 3z" fill="#f8b6a8" />
    </>
  ),
  gray: (
    <>
      <circle cx="8" cy="8" r="7" fill="#7f7f7f" />
      <path d="M2 9q6-6 12-2M5 12q4-3 8-1" stroke="#eee" strokeWidth="2" fill="none" />
    </>
  ),
  flame: (
    <>
      <path d="M8 0q7 6 5 11-2 5-6 5-6-2-4-8l2 2q3-4 3-10" fill="#f28a1d" />
      <path d="M8 8q3 4 0 7-3-2 0-7" fill="#fff" />
    </>
  ),
  mail: (
    <>
      <path d="M0 3h16v12H0z" fill="#f6b73d" />
      <path d="M2 7h12M2 11h12" stroke="#fff" strokeWidth="1.500" />
      <circle cx="13" cy="3" r="2.500" fill="#e02020" />
    </>
  ),
  volume: <path d="M1 6h3l4-4v12l-4-4H1zM10 5q3 3 0 6M12 3q5 5 0 10" fill="none" stroke="#333" strokeWidth="1.300" />,
  network: <path d="M3 3h12v8H3zM9 11v3M5 14h8M1 6v9" fill="none" stroke="#333" strokeWidth="1.400" />,
  shield: (
    <>
      <path d="M8 1l6 2v5q0 5-6 7-6-2-6-7V3zM8 1v14M2 8h12" fill="#fff" stroke="#333" strokeWidth="1.300" />
      <circle cx="12" cy="12" r="3.500" fill="#1fa24a" />
    </>
  ),
  lang: <path d="M3 5h10v5H3zM8 1v14" fill="none" stroke="#777" strokeWidth="1.400" />,
};

function AppIcon({ name, className }) {
  return <svg viewBox="0 0 16 16" className={className} aria-hidden="true">{APPS[name]}</svg>;
}

const PINNED = ["edge", "wechat", "wps", "qcloud", "kplayer", "film", "arcmap", "music"];
const TRAY = ["ime", "wps", "qcloud", "pink", "edge", "disk", "wechat", "music", "nvidia", "red", "gray", "flame", "mail", "volume", "network", "shield", "lang"];

function Taskbar() {
  return (
    <footer className="flex h-[22px] shrink-0 items-center bg-linear-to-r from-[#dce3bf] via-[#ecdfbc] to-[#d8d6d2]">
      <button aria-label="开始" className="flex w-[28px] justify-center">
        <svg viewBox="0 0 10 10" className="size-[9px]"><path d="M0 1.300L4.500.7v4H0zM5.200.6L10 0v4.700H5.200zM0 5.300h4.500v4L0 8.700zM5.200 5.300H10V10l-4.800-.6z" fill="#111" /></svg>
      </button>
      <label className="flex h-full w-[161px] items-center overflow-hidden border border-r-0 border-b-0 border-[#c9c9b9] bg-white">
        <svg viewBox="0 0 10 10" className="ml-[6px] size-[9px]"><circle cx="6" cy="4" r="3.200" fill="none" stroke="#333" /><path d="M3.500 6.500L.5 9.500" stroke="#333" /></svg>
        <input aria-label="搜索" defaultValue="罗永浩力挺小米汽车" className="ml-[5px] min-w-0 flex-1 bg-transparent text-[8px] leading-[12px] text-[#333] outline-none" />
        <svg viewBox="0 0 44 22" className="h-[21px] w-[44px]" aria-hidden="true">
          <path d="M0 21q10-4 44-2v3H0z" fill="#7d6c58" />
          <path d="M8 11h6v9H8zM14 7h6v12h-6z" fill="#efe3d0" />
          <path d="M11 9v2M17 5v2" stroke="#e58a2c" strokeWidth="1.500" />
          <ellipse cx="32" cy="17" rx="9" ry="3" fill="#6f6f6a" />
          <ellipse cx="32" cy="13" rx="7" ry="2.600" fill="#3d4045" />
          <ellipse cx="31" cy="9" rx="6" ry="2.300" fill="#8f9092" />
          <ellipse cx="31" cy="5.500" rx="5" ry="2" fill="#54473b" />
          <ellipse cx="31" cy="2.500" rx="4" ry="1.600" fill="#c69a62" />
        </svg>
      </label>
      <button aria-label="任务视图" className="flex w-[28px] justify-center">
        <svg viewBox="0 0 10 10" className="size-[9px]"><path d="M.5 3h6v4h-6zM.5 0v1.500h6V0M.5 10V8.500h6V10M9 0v2M9 4v6" fill="none" stroke="#222" /></svg>
      </button>
      {PINNED.map((name) => (
        <button key={name} aria-label={name} className={`flex h-full w-[28px] flex-col items-center justify-between pt-[4px] ${name === "arcmap" ? "bg-[#f7f2e6]" : ""}`}>
          <AppIcon name={name} className="size-[14px]" />
          <span className="h-px w-[23px] bg-[#0a74d4]" />
        </button>
      ))}
      <div className="ml-auto flex w-[226px] items-center justify-between">
        {TRAY.map((name) => (
          <button key={name} aria-label={name}><AppIcon name={name} className="size-[9px]" /></button>
        ))}
      </div>
      <div className="ml-[5px] w-[36px] text-center text-[7px] leading-[11px] text-[#222]">
        <div>17:25</div>
        <div>2024/7/24</div>
      </div>
      <button aria-label="通知" className="relative mr-[8px] ml-[9px] h-[14px] w-[14px]">
        <svg viewBox="0 0 14 14" className="size-[14px]">
          <path d="M0 1h9v8H4l-2 2V9H0z" fill="#111" />
          <path d="M2 3.500h5M2 6h5" stroke="#ddd" strokeWidth="0.700" />
          <circle cx="9.500" cy="9" r="4" fill="#dcdad5" stroke="#666" strokeWidth="0.700" />
        </svg>
        <span className="absolute top-[5px] left-[8px] text-[6px] leading-[8px]">1</span>
      </button>
    </footer>
  );
}

export default function App() {
  return (
    <div className="flex h-screen flex-col overflow-hidden bg-[#f0f0f0] font-[Open_Sans,Noto_Sans_CJK_SC,sans-serif] text-[#111]">
      <Header />
      <div className="flex min-h-0 flex-1">
        <Toolbox />
        <Contents />
        <MapArea />
        <aside className="w-[13px] shrink-0 bg-[#fafafa] pt-px">
          <div className="ml-px flex flex-col items-center gap-px rounded-l-sm border border-r-0 border-[#c4c4c4] bg-[#f6f6f6] py-px text-[#444]">
            <Icon name="catalog" className="size-[9px]" />
            <button className="w-[8px] text-[7px] leading-[8px]">目录</button>
          </div>
        </aside>
      </div>
      <div className="flex h-[12px] shrink-0 items-center justify-end pr-[71px] text-[7px] whitespace-pre">531756.94  3098524.914 米</div>
      <Taskbar />
    </div>
  );
}
